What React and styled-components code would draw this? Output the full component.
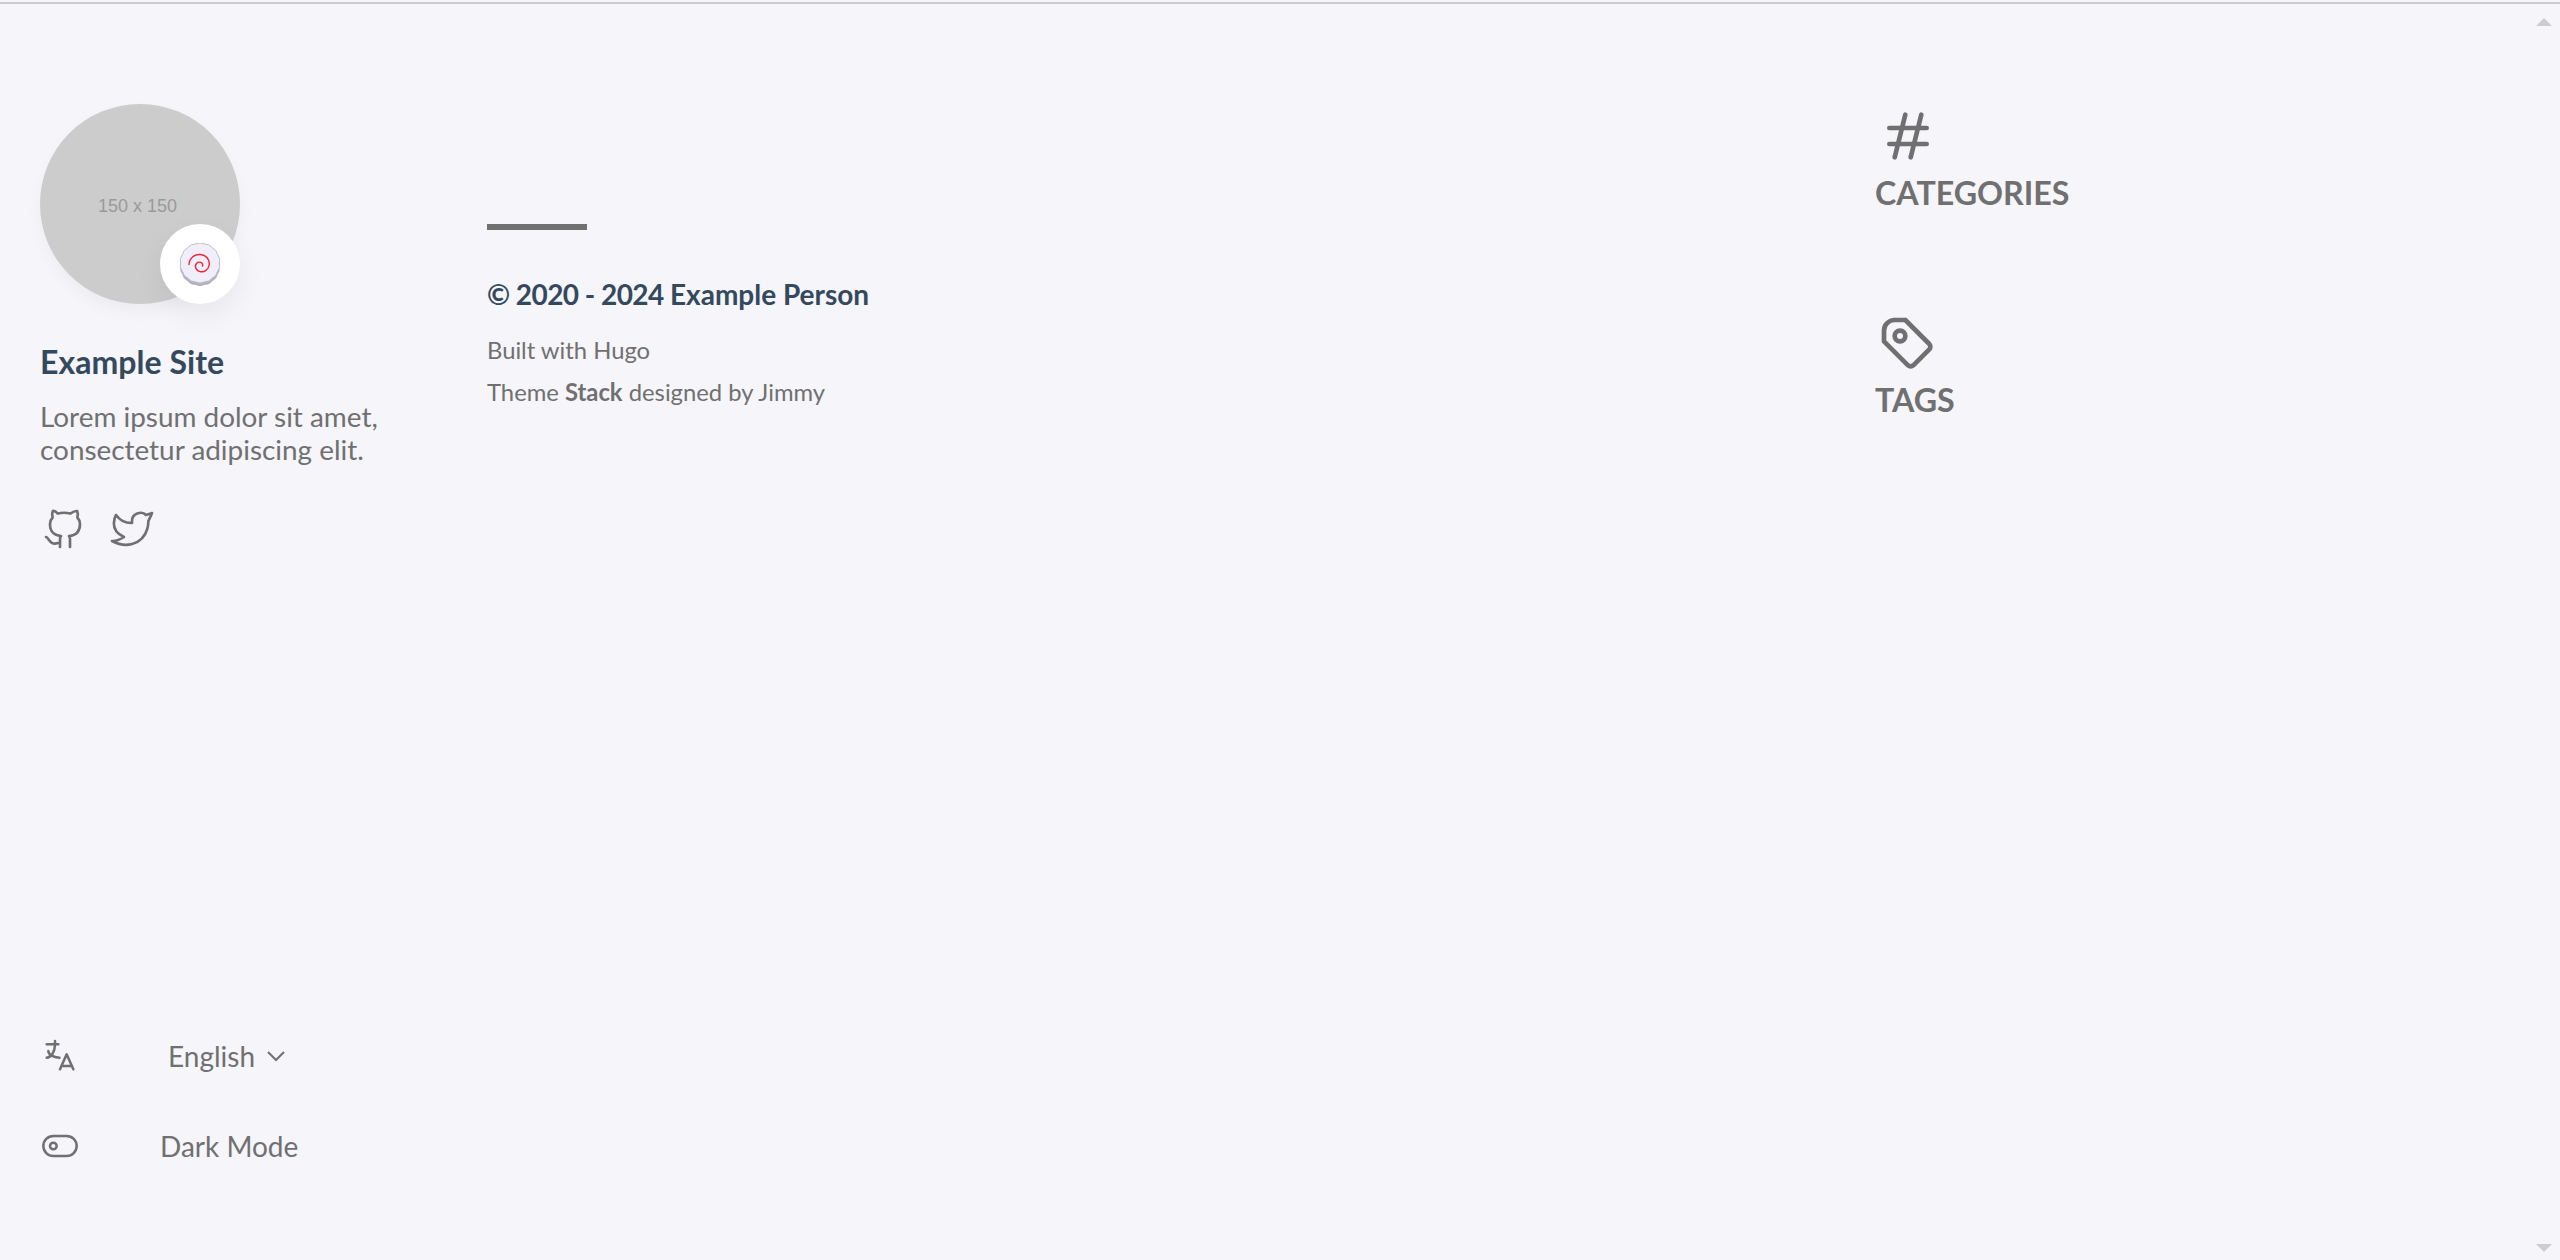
import React from "react";
import styled, { createGlobalStyle } from "styled-components";

const GlobalStyle = createGlobalStyle`
  html, body {
    margin: 0;
    padding: 0;
    height: 100%;
    overflow: hidden;
    background: #f5f5fa;
  }
  body {
    font-family: "Lato", "Liberation Sans", sans-serif;
    color: #707070;
  }
`;

const Page = styled.div`
  height: 100vh;
  display: flex;
  flex-direction: column;
  padding-top: 2px;
  box-sizing: border-box;
`;

const TopRule = styled.div`
  height: 2px;
  background: #cccccc;
  flex: none;
`;

const Body = styled.div`
  flex: 1;
  display: flex;
  min-height: 0;
`;

const Sidebar = styled.aside`
  width: 447px;
  flex: none;
  padding: 100px 0 94px 40px;
  display: flex;
  flex-direction: column;
`;

const Avatar = styled.div`
  position: relative;
  width: 200px;
  height: 200px;
`;

const AvatarImage = styled.div`
  width: 200px;
  height: 200px;
  border-radius: 50%;
  background: #cccccc;
  box-shadow: 0 8px 16px rgba(0, 0, 0, 0.04);
  color: #9a9a9a;
  font: 18px "Liberation Sans", sans-serif;
  display: flex;
  align-items: center;
  justify-content: center;
  padding: 5px 5px 0 0;
  box-sizing: border-box;
`;

const EmojiBadge = styled.span`
  position: absolute;
  right: 0;
  bottom: 0;
  width: 80px;
  height: 80px;
  border-radius: 50%;
  background: #ffffff;
  box-shadow: 0 12px 28px rgba(0, 0, 0, 0.06);
  display: flex;
  align-items: center;
  justify-content: center;
`;

const SiteName = styled.h1`
  margin: 38px 0 0;
  font-size: 32px;
  line-height: 40px;
  font-weight: 700;
  letter-spacing: 0.05px;
  color: #34495e;
`;

const SiteDescription = styled.p`
  margin: 18px 0 0;
  font-size: 27.9px;
  line-height: 33px;
  font-weight: 400;
  color: #707070;
`;

const SocialMenu = styled.div`
  display: flex;
  gap: 20px;
  margin-top: 39px;
`;

const BottomMenu = styled.div`
  margin-top: auto;
  display: flex;
  flex-direction: column;
  gap: 51px;
`;

const MenuRow = styled.div`
  display: flex;
  align-items: center;
  height: 40px;
  font-size: 28px;
  color: #707070;
`;

const MenuLabel = styled.span`
  margin-left: ${(p) => p.$indent}px;
  padding-top: ${(p) => p.$drop || 0}px;
  display: flex;
  align-items: center;
`;

const Main = styled.main`
  width: 1388px;
  flex: none;
  padding-top: 220px;
`;

const FooterRule = styled.div`
  width: 100px;
  height: 6px;
  background: #707070;
`;

const Copyright = styled.div`
  margin-top: 46px;
  font-size: 28px;
  line-height: 36px;
  font-weight: 700;
  color: #34495e;
`;

const Years = styled.span`
  letter-spacing: -0.55px;
`;

const PoweredBy = styled.div`
  margin-top: 17px;
  font-size: 23.8px;
  line-height: 42px;
  color: #707070;
  b {
    font-weight: 700;
  }
`;

const Aside = styled.aside`
  flex: 1;
  padding-top: 100px;
`;

const WidgetSection = styled.section`
  height: 208px;
`;

const WidgetIcon = styled.div`
  height: 64px;
  line-height: 0;
  padding-left: 1px;
`;

const WidgetTitle = styled.h2`
  margin: ${(p) => p.$gap}px 0 0;
  font-size: 32.2px;
  line-height: 40px;
  font-weight: 700;
  color: #707070;
  text-transform: uppercase;
`;

const Scrollbar = styled.div`
  flex: none;
  width: 16px;
  margin-right: 8px;
  padding: 14px 0 8px;
  display: flex;
  flex-direction: column;
  justify-content: space-between;
`;

const Arrow = styled.span`
  width: 0;
  height: 0;
  border-left: 8px solid transparent;
  border-right: 8px solid transparent;
  ${(p) => (p.$down ? "border-top" : "border-bottom")}: 8px solid #cdcdcd;
`;

const LanguageSlot = styled.span`
  display: flex;
  padding-top: 2px;
`;

const Icon = ({ size, stroke, children }) => (
  <svg
    width={size}
    height={size}
    viewBox="0 0 24 24"
    fill="none"
    stroke="#707070"
    strokeWidth={stroke}
    strokeLinecap="round"
    strokeLinejoin="round"
  >
    {children}
  </svg>
);

const Github = () => (
  <Icon size={48} stroke={1.33}>
    <path d="M9 19c-4.286 1.35-4.286-2.55-6-3m12 5v-3.5c0-1 .099-1.405-.5-2 2.791-.3 5.5-1.366 5.5-6.04a4.567 4.567 0 0 0-1.333-3.21 4.192 4.192 0 0 0-.08-3.227s-1.05-.3-3.476 1.267a12.334 12.334 0 0 0-6.222 0C7.462 2.723 6.413 3.023 6.413 3.023a4.192 4.192 0 0 0-.08 3.227A4.566 4.566 0 0 0 5 9.486c0 4.64 2.709 5.68 5.5 6.014-.591.589-.56 1.183-.5 2V21" />
  </Icon>
);

const Twitter = () => (
  <Icon size={48} stroke={1.33}>
    <path d="M22 4.01c-1 .49-1.98.689-3 .99-1.121-1.265-2.783-1.335-4.38-.737S11.977 6.323 12 8v1c-3.245.083-6.135-1.395-8-4 0 0-4.182 7.433 4 11-1.872 1.247-3.739 2.088-6 2 3.308 1.803 6.913 2.423 10.034 1.517 3.58-1.04 6.522-3.723 7.651-7.742a13.84 13.84 0 0 0 .497-3.753C20.18 7.773 21.692 5.25 22 4.009z" />
  </Icon>
);

const Language = () => (
  <Icon size={40} stroke={1.5}>
    <path d="M4 5h7M9 3v2c0 4.418-2.239 8-5 8M5 9c-.003 2.144 2.952 3.908 6.7 4M12 20l4-9 4 9M19.1 18h-6.2" />
  </Icon>
);

const Toggle = () => (
  <Icon size={40} stroke={1.5}>
    <circle cx="8" cy="12" r="2" />
    <rect x="2" y="6" width="20" height="12" rx="6" />
  </Icon>
);

const Chevron = () => (
  <svg width="20" height="12" viewBox="0 0 20 12" fill="none" stroke="#707070" strokeWidth="2" style={{ marginLeft: 11 }}>
    <path d="M2 2l8 8 8-8" />
  </svg>
);

const Hash = () => (
  <Icon size={64} stroke={1.75}>
    <path d="M5 9h14M5 15h14M11 4L7 20M17 4l-4 16" />
  </Icon>
);

const Tag = () => (
  <Icon size={64} stroke={1.75}>
    <path d="M11 3l9 9a1.5 1.5 0 0 1 0 2l-6 6a1.5 1.5 0 0 1-2 0l-9-9V7a4 4 0 0 1 4-4h4" />
    <circle cx="9" cy="9" r="2" />
  </Icon>
);

// the little fish cake emoji on the avatar
const Narutomaki = () => {
  const scallop = [];
  const n = 14;
  for (let i = 0; i <= n; i++) {
    const a = (i / n) * Math.PI * 2;
    const x = 20 + 18.6 * Math.cos(a);
    const y = 19 + 18.6 * Math.sin(a);
    scallop.push(i === 0 ? `M${x.toFixed(2)} ${y.toFixed(2)}` : `A9 9 0 0 1 ${x.toFixed(2)} ${y.toFixed(2)}`);
  }
  const d = scallop.join("") + "Z";
  return (
    <svg width="42" height="44" viewBox="0 0 40 42" style={{ marginTop: 1 }}>
      <path d={d} transform="translate(0 3)" fill="#b6b2c2" />
      <path d={d} fill="#f0eef8" stroke="#b6b2c2" strokeWidth="0.8" />
      <path
        d="M9.500 20.500C10 14 15 10.500 20.500 11c5.500 .5 9 5 8.300 10-.6 4.500-4.800 7.300-8.800 6.300-3.300-.8-5-3.800-4-6.500 .8-2 3-3 4.800-2.300 1.500 .6 2.200 2.200 1.500 3.500"
        fill="none"
        stroke="#ee2738"
        strokeWidth="1.4"
        strokeLinecap="round"
      />
    </svg>
  );
};

export default function App() {
  return (
    <>
      <GlobalStyle />
      <Page>
        <TopRule />
        <Body>
          <Sidebar>
            <Avatar>
              <AvatarImage>150 x 150</AvatarImage>
              <EmojiBadge>
                <Narutomaki />
              </EmojiBadge>
            </Avatar>
            <SiteName>Example Site</SiteName>
            <SiteDescription>
              Lorem ipsum dolor sit amet,
              <br />
              consectetur adipiscing elit.
            </SiteDescription>
            <SocialMenu>
              <Github />
              <Twitter />
            </SocialMenu>
            <BottomMenu>
              <MenuRow>
                <LanguageSlot>
                  <Language />
                </LanguageSlot>
                <MenuLabel $indent={88} $drop={2}>
                  English
                  <Chevron />
                </MenuLabel>
              </MenuRow>
              <MenuRow>
                <Toggle />
                <MenuLabel $indent={80}>Dark Mode</MenuLabel>
              </MenuRow>
            </BottomMenu>
          </Sidebar>
          <Main>
            <FooterRule />
            <Copyright>
              <Years>© 2020 - 2024 </Years>Example Person
            </Copyright>
            <PoweredBy>
              Built with Hugo
              <br />
              Theme <b>Stack</b> designed by Jimmy
            </PoweredBy>
          </Main>
          <Aside>
            <WidgetSection>
              <WidgetIcon>
                <Hash />
              </WidgetIcon>
              <WidgetTitle $gap={5}>Categories</WidgetTitle>
            </WidgetSection>
            <WidgetSection>
              <WidgetIcon>
                <Tag />
              </WidgetIcon>
              <WidgetTitle $gap={4}>Tags</WidgetTitle>
            </WidgetSection>
          </Aside>
          <Scrollbar>
            <Arrow />
            <Arrow $down />
          </Scrollbar>
        </Body>
      </Page>
    </>
  );
}
